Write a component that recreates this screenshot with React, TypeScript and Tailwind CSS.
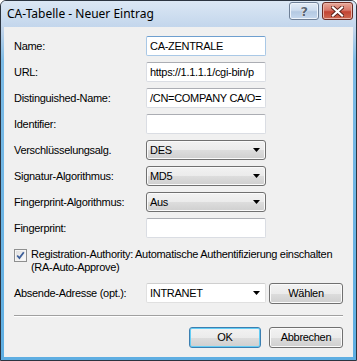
import React from "react";

const gradBtn =
  "bg-[linear-gradient(#f2f2f2_0%,#ebebeb_50%,#dddddd_50%,#cfcfcf_100%)]";

function Arrow() {
  return (
    <svg width="7" height="4" viewBox="0 0 7 4" className="shrink-0">
      <path d="M0 0H7L3.5 4Z" fill="#000" />
    </svg>
  );
}

function TextInput({ value, focus }: { value?: string; focus?: boolean }) {
  return (
    <div
      className={
        "h-[20px] w-[120px] bg-white border rounded-[2px] flex items-center pl-[3px] overflow-hidden whitespace-nowrap " +
        (focus
          ? "border-[#a9c8e6] border-t-[#6e9fcf]"
          : "border-[#dadde3] border-t-[#abadb3]")
      }
    >
      {value}
    </div>
  );
}

function Select({ value }: { value: string }) {
  return (
    <div
      className={
        "h-[20px] w-[120px] rounded-[3px] border border-[#707070] flex items-center justify-between pl-[3px] pr-[5px] shadow-[inset_0_0_0_1px_#fafafa] " +
        gradBtn
      }
    >
      <span>{value}</span>
      <Arrow />
    </div>
  );
}

function Row({ label, children }: { label: string; children: React.ReactNode }) {
  return (
    <div className="flex items-center h-[20px]">
      <div className="w-[132px] shrink-0 whitespace-nowrap">{label}</div>
      {children}
    </div>
  );
}

function Button({
  label,
  width,
  def,
}: {
  label: string;
  width: string;
  def?: boolean;
}) {
  return (
    <div
      className={
        "h-[21px] rounded-[3px] border flex items-center justify-center " +
        width +
        " " +
        gradBtn +
        " " +
        (def
          ? "border-[#3c7fb1] shadow-[inset_0_0_0_1px_#64cdf5]"
          : "border-[#707070] shadow-[inset_0_0_0_1px_#fafafa]")
      }
    >
      {label}
    </div>
  );
}

export default function App() {
  return (
    <div className="w-[357px] h-[361px] flex flex-col border border-[#2b3440] rounded-t-[6px] bg-[linear-gradient(#d3e2f2,#bfd3ea_30px,#7cbbe6_60px,#5eaee2)] overflow-hidden font-['Liberation_Sans',Arial,sans-serif] text-[11px] tracking-[-0.3px] text-black">
      {/* Title bar */}
      <div className="h-[26px] shrink-0 flex items-center justify-between pl-[6px] pr-[3px] bg-[linear-gradient(#dbe7f4,#c3d6ec)]">
        <div className="font-['Noto_Sans',sans-serif] text-[12px] tracking-normal leading-none text-black -mt-[1px]">
          CA-Tabelle - Neuer Eintrag
        </div>
        <div className="flex gap-[3px] self-start mt-[1px]">
          <div className="w-[30px] h-[18px] rounded-[3px] border border-[#6e7f96] bg-[linear-gradient(#e3ecf6_0%,#cddcee_45%,#b4c9e2_55%,#c6d8ee_100%)] shadow-[inset_0_0_0_1px_#eef4fb] flex items-center justify-center">
            <span className="font-['DejaVu_Sans',sans-serif] font-bold text-[13px] leading-none text-[#5a6674] [text-shadow:0_0_1px_#fff,0_0_1px_#fff]">
              ?
            </span>
          </div>
          <div className="w-[31px] h-[18px] rounded-[3px] border border-[#6a2a22] bg-[linear-gradient(#e8a99a_0%,#d7776a_45%,#c24433_55%,#cf6a52_100%)] shadow-[inset_0_0_0_1px_#eab3a8] flex items-center justify-center">
            <svg width="13" height="11" viewBox="0 0 13 11">
              <path
                d="M2 1.5L11 9.5M11 1.5L2 9.5"
                stroke="#5a231c"
                strokeWidth="4"
                strokeLinecap="square"
              />
              <path
                d="M2 1.5L11 9.5M11 1.5L2 9.5"
                stroke="#fff"
                strokeWidth="2.2"
                strokeLinecap="square"
              />
            </svg>
          </div>
        </div>
      </div>

      {/* Content */}
      <div className="flex-1 min-h-0 mx-[3px] mb-[3px] bg-[#f0f0f0] flex flex-col px-[10px] pt-[9px]">
        <div className="flex flex-col gap-[6px]">
          <Row label="Name:">
            <TextInput value="CA-ZENTRALE" focus />
          </Row>
          <Row label="URL:">
            <TextInput value="https://1.1.1.1/cgi-bin/p" />
          </Row>
          <Row label="Distinguished-Name:">
            <TextInput value="/CN=COMPANY CA/O=" />
          </Row>
          <Row label="Identifier:">
            <TextInput />
          </Row>
          <Row label="Verschlüsselungsalg.">
            <Select value="DES" />
          </Row>
          <Row label="Signatur-Algorithmus:">
            <Select value="MD5" />
          </Row>
          <Row label="Fingerprint-Algorithmus:">
            <Select value="Aus" />
          </Row>
          <Row label="Fingerprint:">
            <TextInput />
          </Row>
        </div>

        {/* Checkbox */}
        <div className="flex mt-[10px] gap-[4px]">
          <div className="w-[13px] h-[13px] shrink-0 mt-[1px] border border-[#8e8f8f] bg-[linear-gradient(135deg,#dcdcdc,#fefefe)] shadow-[inset_0_0_0_1px_#f4f4f4] flex items-center justify-center">
            <svg width="9" height="9" viewBox="0 0 9 9">
              <path
                d="M1.2 4.5L3.4 7L7.8 1.2"
                fill="none"
                stroke="#3d5f9a"
                strokeWidth="1.8"
              />
            </svg>
          </div>
          <div className="leading-[13px] whitespace-nowrap">
            Registration-Authority: Automatische Authentifizierung einschalten
            <br />
            (RA-Auto-Approve)
          </div>
        </div>

        {/* Absende-Adresse */}
        <div className="flex items-center h-[20px] mt-[9px]">
          <div className="w-[132px] shrink-0 whitespace-nowrap">Absende-Adresse (opt.):</div>
          <div className="h-[20px] w-[120px] bg-white border border-[#e0e0e0] border-t-[#cfcfcf] rounded-[2px] flex items-center justify-between pl-[3px] pr-[5px]">
            <span>INTRANET</span>
            <Arrow />
          </div>
          <div className="ml-auto">
            <Button label="Wählen" width="w-[74px]" />
          </div>
        </div>

        {/* Separator */}
        <div className="mt-[12px] h-[2px] border-t border-[#a0a0a0] border-b border-b-white" />

        {/* Buttons */}
        <div className="flex justify-end gap-[8px] mt-[10px]">
          <Button label="OK" width="w-[72px]" def />
          <Button label="Abbrechen" width="w-[74px]" />
        </div>
      </div>
    </div>
  );
}
